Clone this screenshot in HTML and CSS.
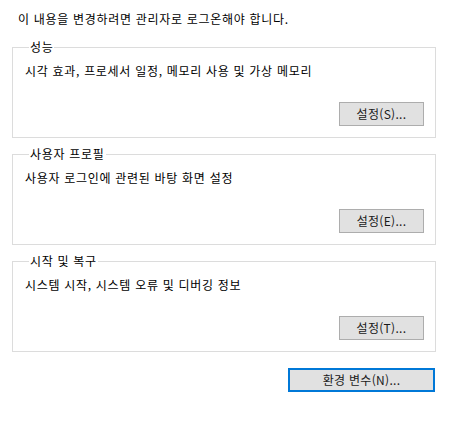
FILE: index.html
```html
<!DOCTYPE html>
<html lang="ko">
<head>
<meta charset="utf-8">
<link rel="stylesheet" href="styles.css">
</head>
<body>
<div class="page">
  <p class="notice">이 내용을 변경하려면 관리자로 로그온해야 합니다.</p>
  <fieldset class="group">
    <legend class="legend">성능</legend>
    <p class="desc">시각 효과, 프로세서 일정, 메모리 사용 및 가상 메모리</p>
    <button class="btn">설정(S)...</button>
  </fieldset>
  <fieldset class="group">
    <legend class="legend">사용자 프로필</legend>
    <p class="desc">사용자 로그인에 관련된 바탕 화면 설정</p>
    <button class="btn">설정(E)...</button>
  </fieldset>
  <fieldset class="group">
    <legend class="legend">시작 및 복구</legend>
    <p class="desc">시스템 시작, 시스템 오류 및 디버깅 정보</p>
    <button class="btn">설정(T)...</button>
  </fieldset>
  <div class="footer">
    <button class="btn btn-env">환경 변수(N)...</button>
  </div>
</div>
</body>
</html>
```

FILE: styles.css
```css
html, body {
  margin: 0;
  padding: 0;
  background: #ffffff;
}
body {
  font-family: "Noto Sans CJK KR", "Noto Sans", sans-serif;
  font-size: 12px;
  color: #000000;
}
.page {
  width: 424px;
  padding: 11px 0 0 12px;
  display: flex;
  flex-direction: column;
}
.notice {
  margin: 0 0 13px 6px;
  line-height: 16px;
  letter-spacing: 0.7px;
}
.group {
  margin: 0 0 9px 0;
  padding: 9px 11px 11px 12px;
  border: 1px solid #dcdcdc;
  display: flex;
  flex-direction: column;
  min-width: 0;
}
.legend {
  margin-left: 4px;
  padding: 0 1px;
  line-height: 14px;
  letter-spacing: 0.7px;
}
.desc {
  margin: 0;
  line-height: 16px;
  letter-spacing: 0.7px;
}
.btn {
  align-self: flex-end;
  margin-top: 23px;
  width: 85px;
  height: 24px;
  box-sizing: border-box;
  border: 1px solid #adadad;
  background: #e1e1e1;
  font-family: inherit;
  font-size: 12px;
  color: #1a1a1a;
  padding: 0;
  line-height: 20px;
  letter-spacing: 0.3px;
}
.footer {
  display: flex;
  justify-content: flex-end;
  padding: 7px 1px 0 0;
}
.btn-env {
  margin-top: 0;
  width: 147px;
  border: 2px solid #0078d7;
}
```
